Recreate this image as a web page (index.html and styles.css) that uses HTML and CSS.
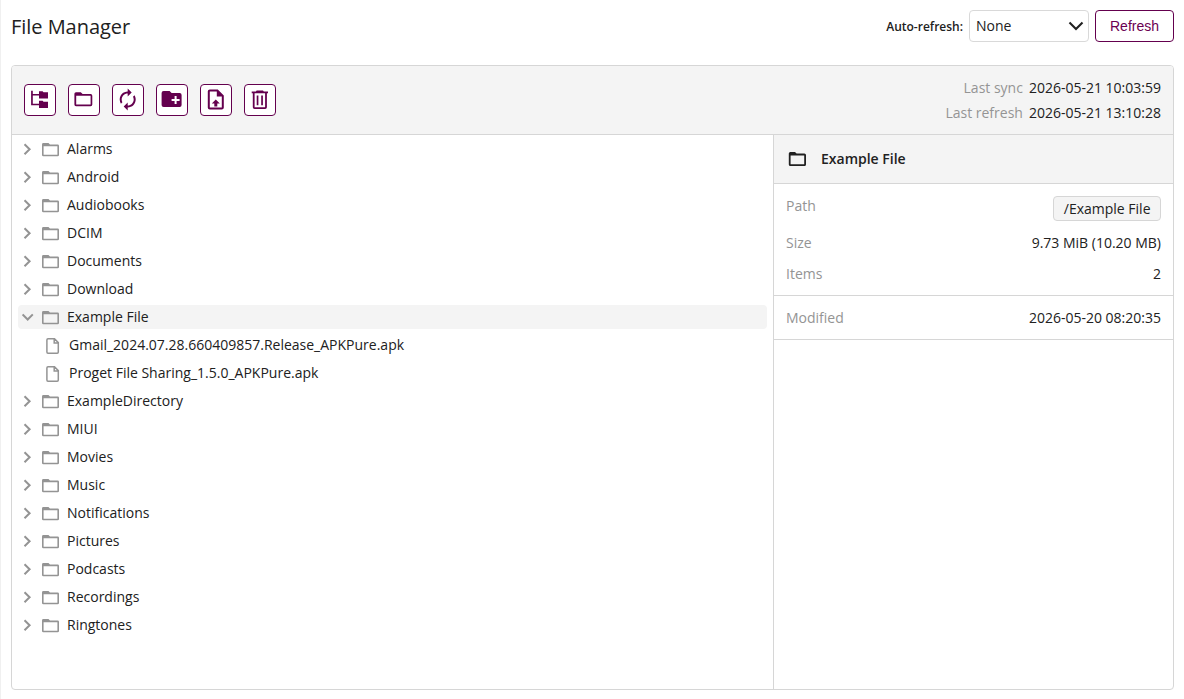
FILE: index.html
```html
<!DOCTYPE html>
<html lang="en">
<head>
<meta charset="utf-8">
<title>File Manager</title>
<link rel="stylesheet" href="styles.css">
</head>
<body>
<svg class="defs" aria-hidden="true">
  <symbol id="folder" viewBox="0 0 18 15"><path fill-rule="evenodd" d="M1.4 1H6.5L8 2.4H15.6Q17 2.4 17 3.8V12.9Q17 14.3 15.6 14.3H1.4Q0 14.3 0 12.9V2.4Q0 1 1.4 1ZM1.6 4.2V12.8H15.4V4.2Z"/></symbol>
  <symbol id="file" viewBox="0 0 14 16"><path d="M2 .8H8.5L12.3 4.6V14Q12.3 15.2 11.2 15.2H2Q.9 15.2.9 14V2Q.9.8 2 .8ZM8.2 1V5H12.2" fill="none" stroke="currentColor" stroke-width="1.5"/></symbol>
  <symbol id="right" viewBox="0 0 12 12"><path d="M2.5 1.3 7.6 6.3 2.5 11.3" fill="none" stroke="currentColor" stroke-width="2"/></symbol>
  <symbol id="down" viewBox="0 0 12 12"><path d="M.6 3.4 5.7 8.5 10.8 3.4" fill="none" stroke="currentColor" stroke-width="2"/></symbol>
</svg>
<main class="page">
  <header class="topbar">
    <h1 class="title">File Manager</h1>
    <span class="auto-label">Auto-refresh:</span>
    <div class="select"><span>None</span><svg width="16" height="10" viewBox="0 0 16 10"><path d="M1.5 1.6 8 8 14.5 1.6" fill="none" stroke="currentColor" stroke-width="2.1"/></svg></div>
    <button class="refresh">Refresh</button>
  </header>
  <section class="card">
    <div class="toolbar">
      <div class="tools">
        <button class="tool" aria-label="Tree"><svg viewBox="0 0 24 24"><path d="M3.1 2.7H4.8V6H11V3.2H14.6L15.5 4.2H20V10.5H11V7.5H4.8V15.7H11V12.7H14.6L15.5 13.7H20V20H11V17.2H3.1Z"/></svg></button>
        <button class="tool" aria-label="Folder"><svg viewBox="0 0 24 24"><path fill-rule="evenodd" d="M4 4.2H8.8L10.6 6H18.6Q20.3 6 20.3 7.7V16.6Q20.3 18.2 18.6 18.2H4Q2.4 18.2 2.4 16.6V5.8Q2.4 4.2 4 4.2ZM4.2 7.8V16.5H18.6V7.8Z"/></svg></button>
        <button class="tool" aria-label="Sync"><svg viewBox="0.3 0.5 24 24"><path d="M12 6v3l4-4-4-4v3c-4.42 0-8 3.58-8 8 0 1.57.46 3.03 1.24 4.26L6.7 14.8A5.87 5.87 0 0 1 6 12c0-3.31 2.69-6 6-6zm6.76 1.74L17.3 9.2c.44.84.7 1.79.7 2.8 0 3.31-2.69 6-6 6v-3l-4 4 4 4v-3c4.42 0 8-3.58 8-8 0-1.57-.46-3.03-1.24-4.26z"/></svg></button>
        <button class="tool" aria-label="New folder"><svg viewBox="0.4 1 24 24"><path fill-rule="evenodd" d="M4 4H10L12 6H20Q22 6 22 8V18Q22 20 20 20H4Q2 20 2 18V6Q2 4 4 4ZM15 9V12H12V14H15V17H17V14H20V12H17V9Z"/></svg></button>
        <button class="tool" aria-label="Upload"><svg viewBox="0.2 0.4 24 24"><path d="M14 2H6C4.9 2 4 2.9 4 4V20C4 21.1 4.9 22 6 22H18C19.1 22 20 21.1 20 20V8L14 2ZM18 20H6V4H13V9H18V20ZM12 12L8 16H10.5V19H13.5V16H16L12 12Z"/></svg></button>
        <button class="tool" aria-label="Delete"><svg viewBox="0 0 24 24"><path fill-rule="evenodd" d="M8.7 2.6H15L15.8 3.5H20V5.3H18.9V19.2Q18.9 21 17.1 21H6.6Q4.8 21 4.8 19.2V5.3H3.7V3.5H7.9ZM6.6 5.3V19.2H17.1V5.3ZM8.7 7.5H10.4V17.2H8.7ZM13.2 7.5H14.9V17.2H13.2Z"/></svg></button>
      </div>
      <div class="sync">
        <div><span class="muted">Last sync</span><span>2026-05-21 10:03:59</span></div>
        <div><span class="muted">Last refresh</span><span>2026-05-21 13:10:28</span></div>
      </div>
    </div>
    <div class="body">
      <div class="tree">
        <div class="row"><svg class="chev"><use href="#right"/></svg><svg class="fold"><use href="#folder"/></svg>Alarms</div>
        <div class="row"><svg class="chev"><use href="#right"/></svg><svg class="fold"><use href="#folder"/></svg>Android</div>
        <div class="row"><svg class="chev"><use href="#right"/></svg><svg class="fold"><use href="#folder"/></svg>Audiobooks</div>
        <div class="row"><svg class="chev"><use href="#right"/></svg><svg class="fold"><use href="#folder"/></svg>DCIM</div>
        <div class="row"><svg class="chev"><use href="#right"/></svg><svg class="fold"><use href="#folder"/></svg>Documents</div>
        <div class="row"><svg class="chev"><use href="#right"/></svg><svg class="fold"><use href="#folder"/></svg>Download</div>
        <div class="row selected"><svg class="chev"><use href="#down"/></svg><svg class="fold"><use href="#folder"/></svg>Example File</div>
        <div class="row child"><svg class="doc"><use href="#file"/></svg>Gmail_2024.07.28.660409857.Release_APKPure.apk</div>
        <div class="row child"><svg class="doc"><use href="#file"/></svg>Proget File Sharing_1.5.0_APKPure.apk</div>
        <div class="row"><svg class="chev"><use href="#right"/></svg><svg class="fold"><use href="#folder"/></svg>ExampleDirectory</div>
        <div class="row"><svg class="chev"><use href="#right"/></svg><svg class="fold"><use href="#folder"/></svg>MIUI</div>
        <div class="row"><svg class="chev"><use href="#right"/></svg><svg class="fold"><use href="#folder"/></svg>Movies</div>
        <div class="row"><svg class="chev"><use href="#right"/></svg><svg class="fold"><use href="#folder"/></svg>Music</div>
        <div class="row"><svg class="chev"><use href="#right"/></svg><svg class="fold"><use href="#folder"/></svg>Notifications</div>
        <div class="row"><svg class="chev"><use href="#right"/></svg><svg class="fold"><use href="#folder"/></svg>Pictures</div>
        <div class="row"><svg class="chev"><use href="#right"/></svg><svg class="fold"><use href="#folder"/></svg>Podcasts</div>
        <div class="row"><svg class="chev"><use href="#right"/></svg><svg class="fold"><use href="#folder"/></svg>Recordings</div>
        <div class="row"><svg class="chev"><use href="#right"/></svg><svg class="fold"><use href="#folder"/></svg>Ringtones</div>
      </div>
      <aside class="details">
        <div class="details-head"><svg width="20" height="16" viewBox="0 0 20 16"><path fill-rule="evenodd" d="M3.4 1H8L9.6 2.4H17.4Q19 2.4 19 4V13.4Q19 15 17.4 15H3.4Q1.8 15 1.8 13.4V2.6Q1.8 1 3.4 1ZM3.6 4.4V13.2H17.2V4.4Z"/></svg>Example File</div>
        <div class="group">
          <div class="prop path"><span class="muted">Path</span><span class="chip">/Example File</span></div>
          <div class="prop"><span class="muted">Size</span><span>9.73 MiB (10.20 MB)</span></div>
          <div class="prop"><span class="muted">Items</span><span>2</span></div>
        </div>
        <div class="group">
          <div class="prop"><span class="muted">Modified</span><span>2026-05-20 08:20:35</span></div>
        </div>
      </aside>
    </div>
  </section>
</main>
</body>
</html>
```
FILE: styles.css
```css
* { box-sizing: border-box; }
body {
  margin: 0;
  background: #fff;
  color: #212121;
  font: 14px/20px "Open Sans", "Noto Sans", sans-serif;
}
.defs { display: none; }
svg { flex: none; fill: currentColor; }
.page {
  height: 699px;
  padding: 10px 10px 9px;
  border-left: 1px solid #f0f0f0;
  display: flex;
  flex-direction: column;
  gap: 23px;
}
.topbar { display: flex; align-items: center; height: 32px; }
.title { margin: 0 auto 0 0; padding-top: 2px; font-size: 20px; line-height: 32px; font-weight: 400; letter-spacing: -0.04px; }
.auto-label { padding-top: 1px; font-size: 12px; font-weight: 600; margin-right: 6px; }
.select {
  width: 120px; height: 32px; margin-right: 6px; padding: 0 4px 0 6px;
  display: flex; align-items: center; justify-content: space-between;
  border: 1px solid #d9d9d9; border-radius: 4px;
}
.refresh {
  width: 79px; height: 32px; padding: 0;
  color: #6b0052; background: #fff;
  border: 1px solid #64004e; border-radius: 4px;
  font: 14px "Liberation Sans", sans-serif;
}
.card {
  flex: 1;
  display: flex; flex-direction: column;
  border: 1px solid #d6d6d6; border-radius: 4px;
  overflow: hidden;
}
.toolbar {
  height: 69px; padding: 0 12px;
  display: flex; align-items: center; justify-content: space-between;
  background: #f4f4f4; border-bottom: 1px solid #d6d6d6;
}
.tools { display: flex; gap: 12px; }
.tool {
  width: 32px; height: 32px; padding: 0;
  display: flex; align-items: center; justify-content: center;
  background: #fff; color: #64004e;
  border: 1px solid #64004e; border-radius: 4px;
}
.tool svg { width: 24px; height: 24px; }
.sync { text-align: right; line-height: 25px; }
.sync .muted { margin-right: 6px; }
.muted { color: #949494; }
.body { flex: 1; display: flex; }
.tree { flex: 1; padding: 2px 6px; display: flex; flex-direction: column; gap: 4px; }
.row {
  height: 24px; padding-left: 4px;
  display: flex; align-items: center;
  border-radius: 4px;
}
.row svg { color: #949494; }
.selected { background: #f4f4f4; }
.chev { width: 12px; height: 12px; margin-right: 8px; }
.fold { width: 18px; height: 15px; margin: 1px 7px 0 0; }
.child { padding-left: 28px; }
.doc { width: 14px; height: 16px; margin: 2px 9px 0 0; }
.details { width: 400px; border-left: 1px solid #d6d6d6; }
.details-head {
  height: 49px; padding-left: 13px;
  display: flex; align-items: center; gap: 14px;
  background: #f4f4f4; border-bottom: 1px solid #d6d6d6;
  font-weight: 600;
}
.group { padding: 12px 12px 11px; border-bottom: 1px solid #d6d6d6; display: flex; flex-direction: column; gap: 11px; }
.prop { display: flex; justify-content: space-between; }
.path { height: 26px; }
.chip {
  height: 25px; padding: 0 9.5px; line-height: 24px;
  background: #f4f4f4; border: 1px solid #d6d6d6; border-radius: 4px;
}
```
